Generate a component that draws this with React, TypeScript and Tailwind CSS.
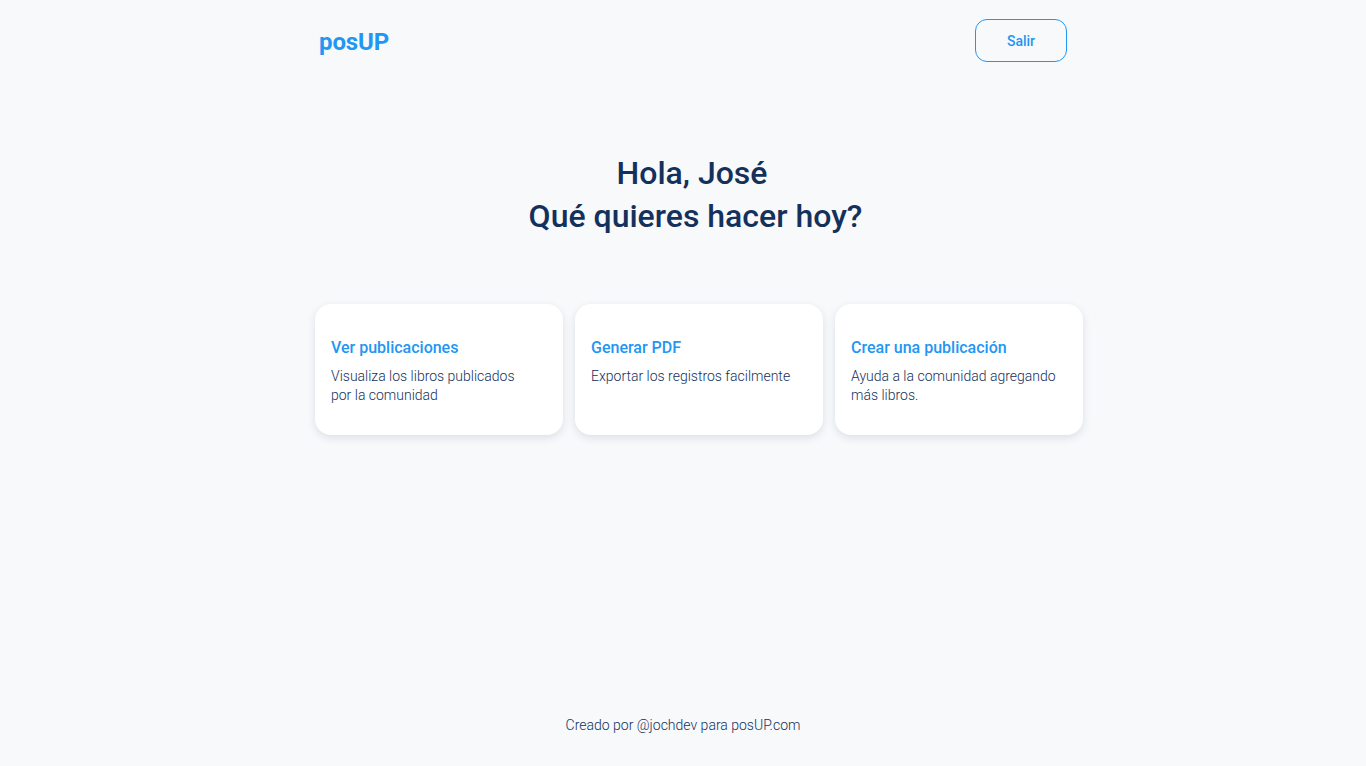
import React from "react";

const cards = [
  { title: "Ver publicaciones", desc: "Visualiza los libros publicados por la comunidad" },
  { title: "Generar PDF", desc: "Exportar los registros facilmente" },
  { title: "Crear una publicación", desc: "Ayuda a la comunidad agregando más libros." },
];

export default function App() {
  return (
    <div className="min-h-[766px] bg-[#f8f9fb] flex flex-col text-[#14315c]" style={{ fontFamily: "Roboto, 'Noto Sans', sans-serif" }}>
      <header className="w-[748px] ml-[319px] pt-[19px] flex items-center justify-between">
        <div className="text-[24px] font-bold text-[#2196f3] tracking-[-0.1px] mt-[2px]">posUP</div>
        <button className="w-[92px] h-[43px] rounded-[12px] border border-[#2196f3] text-[#2196f3] text-[14px] font-medium pt-[2px]">
          Salir
        </button>
      </header>
      <main className="flex flex-col">
        <h1 className="mt-[90px] ml-[312px] w-[760px] text-center text-[32px] leading-[43px] font-medium text-[#14315c]">
          <span className="block">Hola, José</span>
          <span className="block pl-[7px]">Qué quieres hacer hoy?</span>
        </h1>
        <div className="mt-[66px] ml-[315px] w-[768px] grid grid-cols-3 gap-[12px]">
          {cards.map((c) => (
            <div
              key={c.title}
              className="h-[131px] bg-white rounded-[16px] shadow-[0_3px_8px_rgba(20,40,80,0.12)] px-[16px] pt-[34px]"
            >
              <div className="text-[16px] font-medium text-[#2196f3] leading-[20px]">{c.title}</div>
              <div className="mt-[9px] max-w-[207px] text-[14px] font-light leading-[19px] text-[#14315c]">{c.desc}</div>
            </div>
          ))}
        </div>
      </main>
      <footer className="mt-auto pb-[30px] text-center text-[14px] font-light text-[#14315c]">
        Creado por @jochdev para posUP.com
      </footer>
    </div>
  );
}
